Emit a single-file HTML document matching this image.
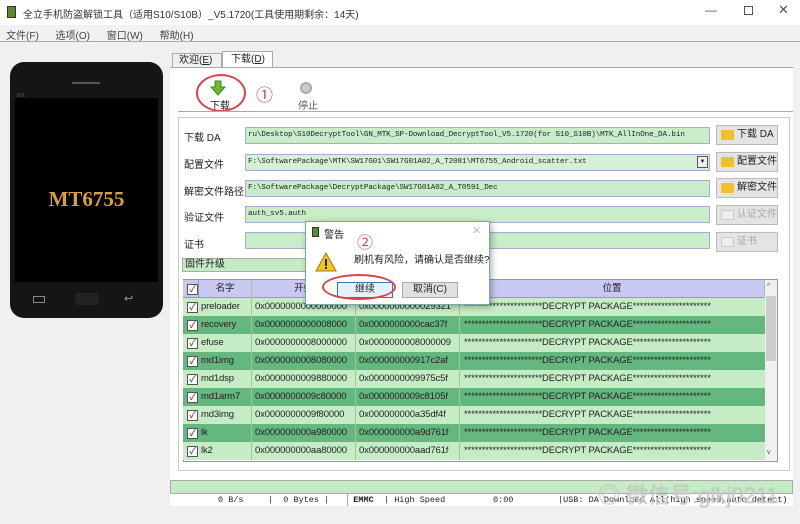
<!DOCTYPE html><html><head><meta charset="utf-8"><style>
*{margin:0;padding:0;box-sizing:border-box}
body{width:800px;height:524px;background:#f0f0f0;font-family:"Liberation Sans","Noto Sans CJK SC",sans-serif;font-size:10px;color:#222;position:relative;overflow:hidden}
.a{position:absolute}
.inp{position:absolute;left:245px;width:465px;height:17px;background:#c9ecc9;border:1px solid #aac;font-family:"Liberation Mono","Noto Sans CJK SC",monospace;font-size:7.6px;letter-spacing:-0.1px;line-height:15px;padding-left:2px;white-space:nowrap;overflow:hidden}
.lab{position:absolute;left:184px;font-size:10px}
.btn{position:absolute;left:716px;width:62px;height:20px;background:#e4e4e4;border:1px solid #bbb;font-size:10px;line-height:18px;padding-left:20px}
.btn i{position:absolute;left:4px;top:4px;width:13px;height:10px;background:#f3c02c;border-radius:1px}
.btn.d{color:#aaa}.btn.d i{background:#eee;border:1px solid #ccc}
.row{position:absolute;left:183px;width:582px;height:18px;font-size:9.5px;letter-spacing:-0.15px;line-height:18px}
.row span{position:absolute;top:0;height:18px;border-right:1px solid #9c9;white-space:nowrap;overflow:hidden}
.l{background:#c6ecc6}.dk{background:#64b77e}
.cb{position:absolute;left:4px;top:4px;width:11px;height:11px;border:1px solid #555;background:#fff;font-size:9px;line-height:9px;text-align:center}
</style></head><body>
<div class="a" style="left:0;top:0;width:800px;height:25px;background:#fff"></div>
<div class="a" style="left:7px;top:6px;width:9px;height:12px;background:#5a8a2a;border:1px solid #333"></div>
<div class="a" style="left:23px;top:6px;font-size:10px;color:#333">全立手机防盗解锁工具（适用S10/S10B）_V5.1720(工具使用期剩余：14天)</div>
<div class="a" style="left:705px;top:3px;font-size:12px;color:#555">—</div>
<div class="a" style="left:744px;top:6px;width:9px;height:9px;border:1px solid #555"></div>
<div class="a" style="left:778px;top:2px;font-size:13px;color:#555">✕</div>
<div class="a" style="left:0;top:25px;width:800px;height:17px;background:#f1f1f4;border-bottom:1px solid #aaa"></div>
<div class="a" style="left:6px;top:27px;font-size:10px;color:#444;word-spacing:14px">文件(F) 选项(O) 窗口(W) 帮助(H)</div>
<!-- phone -->
<div class="a" style="left:10px;top:62px;width:153px;height:256px;background:#151515;border-radius:14px"></div>
<div class="a" style="left:15px;top:98px;width:143px;height:184px;background:#000"></div>
<div class="a" style="left:72px;top:82px;width:28px;height:2px;background:#555"></div>
<div class="a" style="left:17px;top:93px;font-size:5px;color:#555">BM</div>
<div class="a" style="left:15px;top:187px;width:143px;text-align:center;font-family:'Liberation Serif',serif;font-weight:bold;font-size:21px;color:#d9a040">MT6755</div>
<div class="a" style="left:33px;top:296px;width:12px;height:7px;border:1px solid #888"></div>
<div class="a" style="left:75px;top:293px;width:24px;height:12px;background:#222;border-radius:3px"></div>
<div class="a" style="left:124px;top:292px;color:#999;font-size:11px">↩</div>
<!-- tabs -->
<div class="a" style="left:172px;top:53px;width:50px;height:14px;background:#f0f0f0;border:1px solid #aaa;border-bottom:none;font-size:10px;line-height:13px;padding-left:6px">欢迎(<u>E</u>)</div>
<div class="a" style="left:222px;top:51px;width:51px;height:17px;background:#fff;border:1px solid #aaa;border-bottom:none;font-size:10px;line-height:15px;padding-left:8px">下载(<u>D</u>)</div>
<div class="a" style="left:170px;top:67px;width:623px;height:420px;background:#fff;border-top:1px solid #aaa"></div>
<!-- toolbar -->
<svg class="a" style="left:210px;top:80px" width="16" height="16"><path d="M5 1h6v6h4l-7 8-7-8h4z" fill="#6cb82e" stroke="#3d8a1a"/></svg>
<div class="a" style="left:210px;top:97px;font-size:10px">下载</div>
<div class="a" style="left:196px;top:74px;width:50px;height:38px;border:2px solid #d9464a;border-radius:50%"></div>
<div class="a" style="left:256px;top:81px;font-size:17px;color:#d9464a">①</div>
<div class="a" style="left:300px;top:82px;width:12px;height:12px;border-radius:50%;background:#ccc;border:2px solid #aaa"></div>
<div class="a" style="left:298px;top:97px;font-size:10px;color:#555">停止</div>
<div class="a" style="left:178px;top:111px;width:615px;height:1px;background:#aaa"></div>
<div class="a" style="left:178px;top:117px;width:612px;height:354px;border:1px solid #ccc;background:#fff"></div>
<!-- form -->
<div class="lab" style="top:129px">下载 DA</div>
<div class="inp" style="top:127px">ru\Desktop\S10DecryptTool\GN_MTK_SP-Download_DecryptTool_V5.1720(for S10_S10B)\MTK_AllInOne_DA.bin</div>
<div class="btn" style="top:125px"><i></i>下载 DA</div>
<div class="lab" style="top:156px">配置文件</div>
<div class="inp" style="top:154px;background:#d6f0d6">F:\SoftwarePackage\MTK\SW17G01\SW17G01A02_A_T2081\MT6755_Android_scatter.txt</div>
<div class="a" style="left:697px;top:156px;width:11px;height:12px;border:1px solid #555;background:#eee;font-size:6px;text-align:center;line-height:10px">▼</div>
<div class="btn" style="top:152px"><i></i>配置文件</div>
<div class="lab" style="top:183px">解密文件路径</div>
<div class="inp" style="top:180px">F:\SoftwarePackage\DecryptPackage\SW17G01A02_A_T0591_Dec</div>
<div class="btn" style="top:178px"><i></i>解密文件</div>
<div class="lab" style="top:209px">验证文件</div>
<div class="inp" style="top:206px">auth_sv5.auth</div>
<div class="btn d" style="top:205px"><i></i>认证文件</div>
<div class="lab" style="top:236px">证书</div>
<div class="inp" style="top:232px"></div>
<div class="btn d" style="top:232px"><i></i>证书</div>
<div class="a" style="left:182px;top:258px;width:128px;height:14px;background:#c6ecc6;border:1px solid #aaa;font-size:10px;line-height:12px;padding-left:2px">固件升级</div>
<!-- table -->
<div class="a" style="left:183px;top:279px;width:595px;height:183px;border:1px solid #999;background:#fff"></div>
<div class="row" style="top:280px;background:#c8c8f2;border-bottom:1px solid #99a">
<div class="cb">✓</div>
<span style="left:15px;width:54px;text-align:center;border-left:1px solid #99a">名字</span>
<span style="left:69px;width:104px;text-align:center">开始</span>
<span style="left:173px;width:104px"></span>
<span style="left:277px;width:305px;text-align:center">位置</span></div>
<div class="a" style="left:765px;top:280px;width:12px;height:181px;background:#f0f0f0"></div>
<div class="a" style="left:766px;top:296px;width:10px;height:65px;background:#cdcdcd"></div>
<div class="a" style="left:767px;top:283px;font-size:7px;color:#555">^</div>
<div class="a" style="left:767px;top:449px;font-size:7px;color:#555">v</div>
<!-- rows -->
<div class="row l" style="top:298px"><div class="cb">✓</div><span style="left:15px;width:54px;padding-left:3px">preloader</span><span style="left:69px;width:104px;padding-left:3px">0x0000000000000000</span><span style="left:173px;width:104px;padding-left:3px">0x0000000000029321</span><span style="left:277px;width:305px;padding-left:4px;border:none">**********************DECRYPT PACKAGE**********************</span></div>
<div class="row dk" style="top:316px"><div class="cb">✓</div><span style="left:15px;width:54px;padding-left:3px">recovery</span><span style="left:69px;width:104px;padding-left:3px">0x0000000000008000</span><span style="left:173px;width:104px;padding-left:3px">0x0000000000cac37f</span><span style="left:277px;width:305px;padding-left:4px;border:none">**********************DECRYPT PACKAGE**********************</span></div>
<div class="row l" style="top:334px"><div class="cb">✓</div><span style="left:15px;width:54px;padding-left:3px">efuse</span><span style="left:69px;width:104px;padding-left:3px">0x0000000008000000</span><span style="left:173px;width:104px;padding-left:3px">0x0000000008000009</span><span style="left:277px;width:305px;padding-left:4px;border:none">**********************DECRYPT PACKAGE**********************</span></div>
<div class="row dk" style="top:352px"><div class="cb">✓</div><span style="left:15px;width:54px;padding-left:3px">md1img</span><span style="left:69px;width:104px;padding-left:3px">0x0000000008080000</span><span style="left:173px;width:104px;padding-left:3px">0x000000000917c2af</span><span style="left:277px;width:305px;padding-left:4px;border:none">**********************DECRYPT PACKAGE**********************</span></div>
<div class="row l" style="top:370px"><div class="cb">✓</div><span style="left:15px;width:54px;padding-left:3px">md1dsp</span><span style="left:69px;width:104px;padding-left:3px">0x0000000009880000</span><span style="left:173px;width:104px;padding-left:3px">0x0000000009975c5f</span><span style="left:277px;width:305px;padding-left:4px;border:none">**********************DECRYPT PACKAGE**********************</span></div>
<div class="row dk" style="top:388px"><div class="cb">✓</div><span style="left:15px;width:54px;padding-left:3px">md1arm7</span><span style="left:69px;width:104px;padding-left:3px">0x0000000009c80000</span><span style="left:173px;width:104px;padding-left:3px">0x0000000009c8105f</span><span style="left:277px;width:305px;padding-left:4px;border:none">**********************DECRYPT PACKAGE**********************</span></div>
<div class="row l" style="top:406px"><div class="cb">✓</div><span style="left:15px;width:54px;padding-left:3px">md3img</span><span style="left:69px;width:104px;padding-left:3px">0x0000000009f80000</span><span style="left:173px;width:104px;padding-left:3px">0x000000000a35df4f</span><span style="left:277px;width:305px;padding-left:4px;border:none">**********************DECRYPT PACKAGE**********************</span></div>
<div class="row dk" style="top:424px"><div class="cb">✓</div><span style="left:15px;width:54px;padding-left:3px">lk</span><span style="left:69px;width:104px;padding-left:3px">0x000000000a980000</span><span style="left:173px;width:104px;padding-left:3px">0x000000000a9d761f</span><span style="left:277px;width:305px;padding-left:4px;border:none">**********************DECRYPT PACKAGE**********************</span></div>
<div class="row l" style="top:442px"><div class="cb">✓</div><span style="left:15px;width:54px;padding-left:3px">lk2</span><span style="left:69px;width:104px;padding-left:3px">0x000000000aa80000</span><span style="left:173px;width:104px;padding-left:3px">0x000000000aad761f</span><span style="left:277px;width:305px;padding-left:4px;border:none">**********************DECRYPT PACKAGE**********************</span></div>
<!-- dialog -->
<div class="a" style="left:305px;top:221px;width:185px;height:84px;background:#fff;border:1px solid #7aa;box-shadow:2px 2px 6px rgba(0,0,0,.3)"></div>
<div class="a" style="left:312px;top:227px;width:7px;height:10px;background:#5a8a2a;border:1px solid #333"></div>
<div class="a" style="left:324px;top:226px;font-size:10px">警告</div>
<div class="a" style="left:472px;top:224px;color:#bbb;font-size:11px">✕</div>
<div class="a" style="left:357px;top:229px;font-size:16px;color:#d9464a">②</div>
<svg class="a" style="left:315px;top:252px" width="22" height="20"><path d="M11 1L21 19H1z" fill="#f5c518" stroke="#a07a10"/><rect x="10" y="7" width="2" height="7" fill="#222"/><rect x="10" y="15" width="2" height="2" fill="#222"/></svg>
<div class="a" style="left:354px;top:251px;font-size:10px">刷机有风险，请确认是否继续?</div>
<div class="a" style="left:337px;top:282px;width:56px;height:16px;background:#e5f1fb;border:1px solid #2b78c5;text-align:center;line-height:14px;font-size:10px">继续</div>
<div class="a" style="left:402px;top:282px;width:56px;height:16px;background:#e1e1e1;border:1px solid #aaa;text-align:center;line-height:14px;font-size:10px">取消(C)</div>
<div class="a" style="left:322px;top:274px;width:74px;height:26px;border:2px solid #d9464a;border-radius:50%"></div>
<!-- status -->
<div class="a" style="left:170px;top:480px;width:623px;height:14px;background:#c6ecc6;border:1px solid #aaa"></div>
<div class="a" style="left:170px;top:494px;width:623px;height:12px;background:#fff;font-family:'Liberation Mono',monospace;font-size:8.5px;line-height:12px;white-space:nowrap">
<span class="a" style="left:48px">0 B/s</span><span class="a" style="left:98px;">| &nbsp;0 Bytes |</span><span class="a" style="left:177px;width:32px;border-left:1px solid #aaa;font-weight:bold;text-align:center">EMMC</span><span class="a" style="left:214px">| High Speed</span><span class="a" style="left:323px">0:00</span><span class="a" style="left:388px">|USB: DA Download All(high speed,auto detect)</span></div>
<div class="a" style="left:598px;top:478px;font-size:22px;color:rgba(230,230,230,.6);text-shadow:0 0 1px #999">◎ 微信号:glkj0211</div>
</body></html>
